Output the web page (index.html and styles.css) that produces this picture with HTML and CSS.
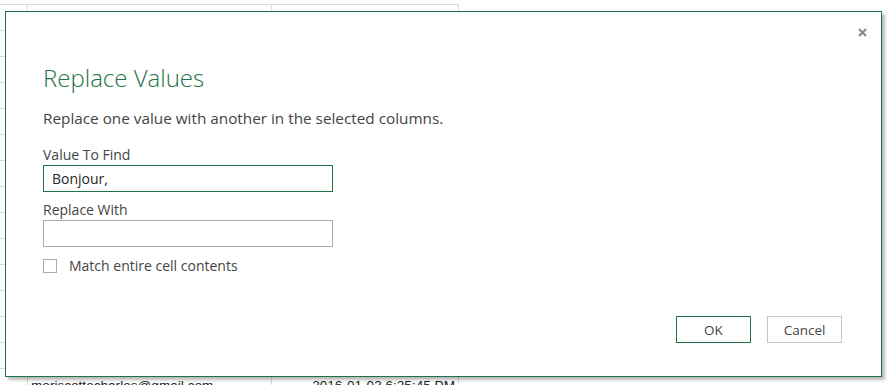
FILE: index.html
```html
<!DOCTYPE html>
<html>
<head>
    <meta charset="UTF-8">
    <meta name="viewport" content="width=device-width, initial-scale=1.0">
    <title>Replace Values</title>
    <link rel="stylesheet" href="styles.css">
</head>
<body>
    <div class="sheet">
        <div class="row"><div class="cell first"></div><div class="cell mail"></div><div class="cell date"></div></div>
        <div class="row"><div class="cell first"></div><div class="cell mail"></div><div class="cell date"></div></div>
        <div class="row"><div class="cell first"></div><div class="cell mail"></div><div class="cell date"></div></div>
        <div class="row"><div class="cell first"></div><div class="cell mail"></div><div class="cell date"></div></div>
        <div class="row"><div class="cell first"></div><div class="cell mail"></div><div class="cell date"></div></div>
        <div class="row"><div class="cell first"></div><div class="cell mail"></div><div class="cell date"></div></div>
        <div class="row"><div class="cell first"></div><div class="cell mail"></div><div class="cell date"></div></div>
        <div class="row"><div class="cell first"></div><div class="cell mail"></div><div class="cell date"></div></div>
        <div class="row"><div class="cell first"></div><div class="cell mail"></div><div class="cell date"></div></div>
        <div class="row"><div class="cell first"></div><div class="cell mail"></div><div class="cell date"></div></div>
        <div class="row"><div class="cell first"></div><div class="cell mail"></div><div class="cell date"></div></div>
        <div class="row"><div class="cell first"></div><div class="cell mail"></div><div class="cell date"></div></div>
        <div class="row"><div class="cell first"></div><div class="cell mail"></div><div class="cell date"></div></div>
        <div class="row"><div class="cell first"></div><div class="cell mail"></div><div class="cell date"></div></div>
        <div class="row"><div class="cell first"></div><div class="cell mail">moriscottecharles@gmail.com</div><div class="cell date">2016-01-03 6:25:45 PM</div></div>
    </div>

    <div class="dialog">
        <div class="topBar">
            <svg class="closeIcon" width="9" height="9" viewBox="0 0 9 9">
                <path d="M1 1 L8 8 M8 1 L1 8" stroke="#8a8a8a" stroke-width="2.2" fill="none"/>
            </svg>
        </div>
        <div class="body">
            <h1 class="title">Replace Values</h1>
            <p class="intro">Replace one value with another in the selected columns.</p>

            <label class="fieldLabel">Value To Find</label>
            <div class="textBox focused">Bonjour,</div>

            <label class="fieldLabel next">Replace With</label>
            <div class="textBox"></div>

            <div class="checkRow">
                <span class="checkBox"></span>
                <span>Match entire cell contents</span>
            </div>
        </div>
        <div class="buttons">
            <button class="dlgButton primary">OK</button>
            <button class="dlgButton">Cancel</button>
        </div>
    </div>
</body>
</html>
```

FILE: styles.css
```css
body {
    margin: 0;
    background: #fff;
    font-family: "Open Sans", "Noto Sans", sans-serif;
    overflow: hidden;
}

.sheet {
    padding-top: 4px;
}

.row {
    display: flex;
    height: 26px;
}

.cell {
    box-sizing: border-box;
    border-top: 1px solid #dadada;
    border-right: 1px solid #dadada;
    font-family: "Liberation Sans", sans-serif;
    font-size: 13.6px;
    color: #222;
    padding: 9px 3px 0 3px;
    white-space: nowrap;
}

.cell.first {
    width: 28px;
}

.cell.mail {
    width: 244px;
}

.cell.date {
    width: 187px;
    text-align: right;
}

.dialog {
    position: absolute;
    left: 5px;
    top: 11px;
    width: 875px;
    height: 364px;
    border: 1px solid #217346;
    background: #fff;
    box-shadow: 3px 3px 3px rgba(0, 0, 0, 0.28);
    display: flex;
    flex-direction: column;
}

.topBar {
    display: flex;
    justify-content: flex-end;
    padding: 16px 14px 0 0;
    height: 9px;
}

.body {
    padding-left: 37px;
    display: flex;
    flex-direction: column;
    align-items: flex-start;
    flex: 1;
}

.title {
    margin: 24px 0 0 0;
    font-size: 24px;
    font-weight: 300;
    line-height: 34px;
    color: #217346;
}

.intro {
    margin: 13px 0 0 0;
    font-size: 15.3px;
    line-height: 20px;
    color: #444;
}

.fieldLabel {
    margin-top: 17px;
    font-size: 14px;
    line-height: 20px;
    color: #444;
}

.fieldLabel.next {
    margin-top: 8px;
}

.textBox {
    box-sizing: border-box;
    width: 290px;
    height: 27px;
    border: 1px solid #ababab;
    padding: 2px 8px;
    font-size: 14px;
    line-height: 21px;
    color: #262626;
}

.textBox.focused {
    border-color: #217346;
}

.checkRow {
    display: flex;
    align-items: center;
    gap: 12px;
    margin-top: 9px;
    font-size: 14px;
    color: #444;
}

.checkBox {
    box-sizing: border-box;
    width: 14px;
    height: 14px;
    border: 1px solid #ababab;
}

.buttons {
    display: flex;
    justify-content: flex-end;
    gap: 16px;
    padding: 0 39px 33px 0;
}

.dlgButton {
    box-sizing: border-box;
    width: 75px;
    height: 27px;
    background: #fff;
    border: 1px solid #c6c6c6;
    font-family: "Open Sans", "Noto Sans", sans-serif;
    font-size: 13.5px;
    color: #444;
    padding: 0;
}

.dlgButton.primary {
    border-color: #217346;
}
```
